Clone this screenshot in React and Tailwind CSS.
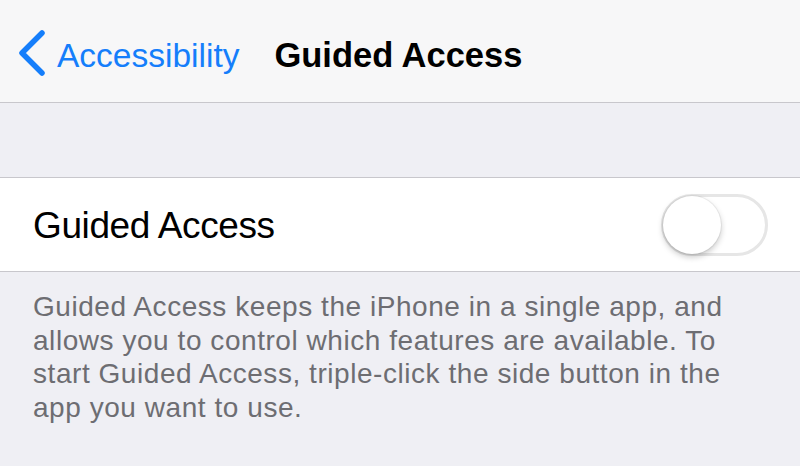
import { useState } from 'react'

function Toggle({ on, onChange }) {
  return (
    <button
      onClick={() => onChange(!on)}
      className="relative w-[107px] h-[62px] rounded-full border-[3px] border-[#e6e6e6] bg-white shrink-0"
    >
      <span className="absolute top-[-1px] left-[-1px] w-[58px] h-[58px] rounded-full bg-white shadow-[0_3px_6px_rgba(0,0,0,0.22),0_0_0_1px_rgba(0,0,0,0.05)]" />
    </button>
  )
}

export default function App() {
  const [guided, setGuided] = useState(false)

  return (
    <div className="w-[800px] h-[466px] bg-[#efeff4] overflow-hidden font-['Liberation_Sans',Arial,sans-serif]">
      {/* Nav bar */}
      <div className="h-[103px] bg-[#f7f7f8] border-b border-[#c8c7cc] flex items-center pl-[18px] pt-[4px]">
        <svg width="28" height="46" viewBox="0 0 28 46" className="text-[#157efb]">
          <path d="M24 3 L4 23 L24 43" fill="none" stroke="currentColor" strokeWidth="5.5" strokeLinecap="round" strokeLinejoin="round" />
        </svg>
        <span className="ml-[11px] pt-[6px] text-[33.5px] text-[#157efb]">Accessibility</span>
        <span className="ml-[35px] pt-[6px] text-[34.5px] font-bold text-black">Guided Access</span>
      </div>

      {/* Section spacer */}
      <div className="h-[74px]" />

      {/* Cell */}
      <div className="h-[95px] bg-white border-y border-[#c8c7cc] flex items-center justify-between pl-[33px] pr-[32px]">
        <span className="pt-[3px] text-[37px] tracking-[-0.4px] text-black">Guided Access</span>
        <Toggle on={guided} onChange={setGuided} />
      </div>

      {/* Footer */}
      <p className="pl-[33px] pr-[50px] pt-[18px] text-[28px] leading-[33.5px] tracking-[0.55px] text-[#6d6d72]">
        Guided Access keeps the iPhone in a single app, and allows you to control which features are available. To start Guided Access, triple-click the side button in the app you want to use.
      </p>
    </div>
  )
}
